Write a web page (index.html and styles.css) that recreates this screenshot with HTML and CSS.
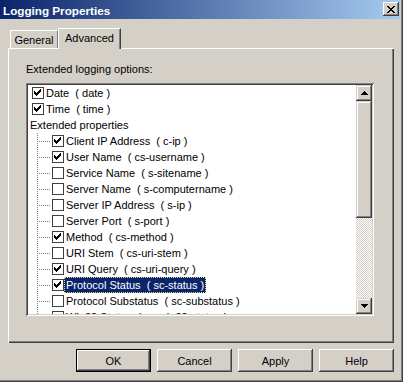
FILE: index.html
```html
<!DOCTYPE html>
<html lang="en">

<head>
    <meta charset="UTF-8" />
    <meta name="viewport" content="width=device-width, initial-scale=1.0" />
    <title>Logging Properties</title>
    <link rel="stylesheet" href="styles.css">
</head>

<body>
    <div class="window">
        <div class="titlebar">
            <span class="title">Logging Properties</span>
            <span class="close">
                <svg width="8" height="7" viewBox="0 0 8 7" shape-rendering="crispEdges">
                    <path fill="#000" d="M0 0h2v1H0z M6 0h2v1H6z M1 1h2v1H1z M5 1h2v1H5z M2 2h4v1H2z M3 3h2v1H3z M2 4h4v1H2z M1 5h2v1H1z M5 5h2v1H5z M0 6h2v1H0z M6 6h2v1H6z" />
                </svg>
            </span>
        </div>

        <div class="client">
            <div class="tabs">
                <span class="tab">General</span>
                <span class="tab active">Advanced</span>
            </div>

            <div class="page">
                <div class="caption">Extended logging options:</div>
                <div class="listbox">
                    <ul class="tree">
                        <li class="node"><span class="check on"></span><span class="label">Date  ( date )</span></li>
                        <li class="node"><span class="check on"></span><span class="label">Time  ( time )</span></li>
                        <li class="node"><span class="label">Extended properties</span></li>
                        <li class="node child"><span class="twig"></span><span class="check on"></span><span class="label">Client IP Address  ( c-ip )</span></li>
                        <li class="node child"><span class="twig"></span><span class="check on"></span><span class="label">User Name  ( cs-username )</span></li>
                        <li class="node child"><span class="twig"></span><span class="check"></span><span class="label">Service Name  ( s-sitename )</span></li>
                        <li class="node child"><span class="twig"></span><span class="check"></span><span class="label">Server Name  ( s-computername )</span></li>
                        <li class="node child"><span class="twig"></span><span class="check"></span><span class="label">Server IP Address  ( s-ip )</span></li>
                        <li class="node child"><span class="twig"></span><span class="check"></span><span class="label">Server Port  ( s-port )</span></li>
                        <li class="node child"><span class="twig"></span><span class="check on"></span><span class="label">Method  ( cs-method )</span></li>
                        <li class="node child"><span class="twig"></span><span class="check"></span><span class="label">URI Stem  ( cs-uri-stem )</span></li>
                        <li class="node child"><span class="twig"></span><span class="check on"></span><span class="label">URI Query  ( cs-uri-query )</span></li>
                        <li class="node child selected"><span class="twig"></span><span class="check on"></span><span class="label">Protocol Status  ( sc-status )</span></li>
                        <li class="node child"><span class="twig"></span><span class="check"></span><span class="label">Protocol Substatus  ( sc-substatus )</span></li>
                        <li class="node child"><span class="twig"></span><span class="check"></span><span class="label">Win32 Status  ( sc-win32-status )</span></li>
                    </ul>
                    <div class="vscroll">
                        <span class="sbtn">
                            <svg width="7" height="4" viewBox="0 0 7 4" shape-rendering="crispEdges">
                                <path fill="#000" d="M3 0h1v1H3z M2 1h3v1H2z M1 2h5v1H1z M0 3h7v1H0z" />
                            </svg>
                        </span>
                        <span class="thumb"></span>
                        <span class="track"></span>
                        <span class="sbtn">
                            <svg width="7" height="4" viewBox="0 0 7 4" shape-rendering="crispEdges">
                                <path fill="#000" d="M0 0h7v1H0z M1 1h5v1H1z M2 2h3v1H2z M3 3h1v1H3z" />
                            </svg>
                        </span>
                    </div>
                </div>
            </div>

            <div class="buttons">
                <button class="btn default">OK</button>
                <button class="btn">Cancel</button>
                <button class="btn">Apply</button>
                <button class="btn">Help</button>
            </div>
        </div>
    </div>
</body>

</html>
```

FILE: styles.css
```css
* {
    box-sizing: border-box;
    margin: 0;
    padding: 0;
}

body {
    font-family: "Liberation Sans", Arial, sans-serif;
    font-size: 11px;
    color: #000;
    background-color: #d4d0c8;
    width: 403px;
    height: 382px;
    overflow: hidden;
}

.window {
    width: 403px;
    height: 382px;
    padding: 0 3px 3px 0;
    background-color: #d4d0c8;
    box-shadow: inset -1px -1px #404040, inset -2px -2px #808080;
    display: flex;
    flex-direction: column;
}

/* title bar */

.titlebar {
    height: 19px;
    display: flex;
    align-items: flex-start;
    justify-content: space-between;
    padding: 0 1px 0 3px;
    background: linear-gradient(to right, #0a246a, #a6caf0);
    color: #fff;
}

.title {
    font-weight: bold;
    font-size: 11.7px;
    line-height: 14px;
    padding-top: 4px;
}

.close {
    width: 16px;
    height: 14px;
    margin-top: 2px;
    display: flex;
    align-items: center;
    justify-content: center;
    background-color: #d4d0c8;
    box-shadow: inset -1px -1px #404040, inset 1px 1px #fff, inset -2px -2px #808080;
}

/* client area */

.client {
    flex: 1;
    display: flex;
    flex-direction: column;
    padding: 9px 6px 0 8px;
}

.tabs {
    height: 20px;
    display: flex;
    align-items: flex-end;
    padding-left: 2px;
}

.tab {
    width: 48px;
    height: 18px;
    padding-top: 1px;
    line-height: 16px;
    text-align: center;
    border-top: 1px solid #fff;
    border-left: 1px solid #fff;
    border-right: 1px solid #808080;
}

.tab.active {
    position: relative;
    z-index: 1;
    width: 63px;
    height: 21px;
    margin-bottom: -1px;
    background-color: #d4d0c8;
    border-right: 1px solid #404040;
    box-shadow: inset -1px 0 #808080;
}

.page {
    height: 295px;
    padding: 14px 0 0 18px;
    box-shadow: inset 1px 1px #fff, inset -1px -1px #404040, inset -2px -2px #808080;
}

.caption {
    line-height: 14px;
    margin-bottom: 7px;
}

/* tree list */

.listbox {
    width: 348px;
    height: 233px;
    padding: 2px;
    display: flex;
    background-color: #fff;
    box-shadow: inset 1px 1px #808080, inset -1px -1px #fff, inset 2px 2px #404040, inset -2px -2px #d4d0c8;
}

.tree {
    flex: 1;
    list-style: none;
    overflow: hidden;
}

.node {
    height: 16px;
    display: flex;
    align-items: center;
    white-space: pre;
}

.twig {
    width: 13px;
    height: 16px;
    margin-left: 9px;
    flex-shrink: 0;
    background:
        repeating-linear-gradient(to bottom, #808080 0 1px, transparent 1px 2px) left top / 1px 100% no-repeat,
        repeating-linear-gradient(to right, #808080 0 1px, transparent 1px 2px) 2px 8px / 11px 1px no-repeat;
}

.check {
    width: 12px;
    height: 12px;
    margin-left: 4px;
    flex-shrink: 0;
    border: 1px solid #404040;
    background-color: #fff;
}

.child .check {
    margin-left: 2px;
}

.check.on {
    background: #fff url("data:image/svg+xml,%3Csvg xmlns='http://www.w3.org/2000/svg' width='7' height='7' shape-rendering='crispEdges'%3E%3Cpath d='M6 0h1v3H6z M5 1h1v3H5z M4 2h1v3H4z M3 3h1v3H3z M2 4h1v3H2z M1 3h1v3H1z M0 2h1v3H0z'/%3E%3C/svg%3E") 1px 1px no-repeat;
}

.label {
    padding: 0 2px;
    line-height: 16px;
}

.selected .label {
    background-color: #0a246a;
    color: #fff;
    outline: 1px dotted #f0d08c;
    outline-offset: -1px;
}

/* scrollbar */

.vscroll {
    width: 16px;
    display: flex;
    flex-direction: column;
}

.sbtn,
.thumb {
    background-color: #d4d0c8;
    box-shadow: inset -1px -1px #404040, inset 1px 1px #d4d0c8, inset -2px -2px #808080, inset 2px 2px #fff;
}

.sbtn {
    height: 16px;
    display: flex;
    align-items: center;
    justify-content: center;
}

.thumb {
    height: 117px;
}

.track {
    flex: 1;
    background: repeating-conic-gradient(#fff 0 25%, #d4d0c8 0 50%) 0 0 / 2px 2px;
}

/* buttons */

.buttons {
    display: flex;
    justify-content: flex-end;
    gap: 6px;
    margin-top: 6px;
}

.btn {
    width: 75px;
    height: 23px;
    font: inherit;
    color: #000;
    border: none;
    background-color: #d4d0c8;
    box-shadow: inset -1px -1px #404040, inset 1px 1px #fff, inset -2px -2px #808080, inset 2px 2px #d4d0c8;
}

.btn.default {
    border: 1px solid #000;
}
```
